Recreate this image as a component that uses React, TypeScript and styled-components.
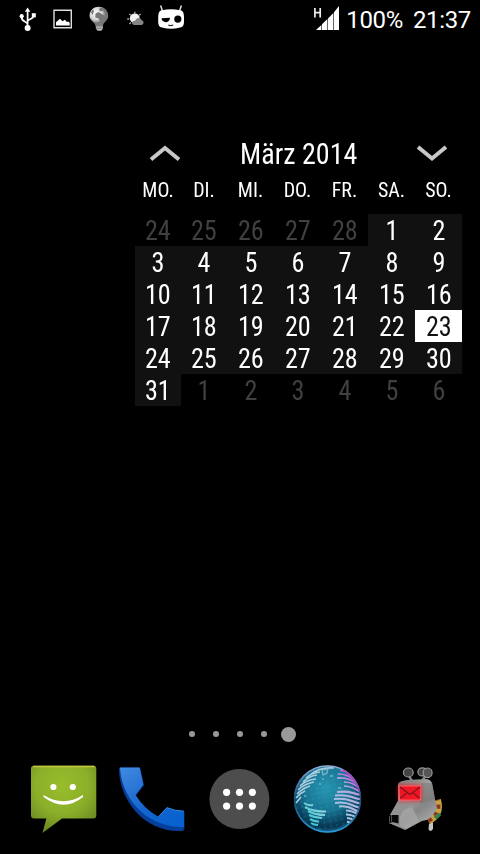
import React from 'react';
import styled, { createGlobalStyle } from 'styled-components';

const GlobalStyle = createGlobalStyle`
  * { box-sizing: border-box; }
  body { margin: 0; background: #000; }
`;

const Screen = styled.main`
  width: 480px;
  height: 854px;
  overflow: hidden;
  background: #000;
  color: #fff;
  font-family: Roboto, "Liberation Sans", sans-serif;
  display: flex;
  flex-direction: column;
`;

const StatusBar = styled.header`
  height: 38px;
  flex: none;
  display: flex;
  justify-content: space-between;
  padding-right: 9px;
`;

const StatusGroup = styled.div`
  display: flex;
`;

const StatusText = styled.span<{ $gap: number }>`
  font-size: 24px;
  font-weight: 380;
  line-height: 40px;
  letter-spacing: -0.35px;
  margin-left: ${(p) => p.$gap}px;
  white-space: nowrap;
`;

const Icon = styled.svg`
  display: block;
  flex: none;
`;

const Calendar = styled.section`
  width: 327px;
  margin: 96px 0 0 135px;
  flex: none;
  font-family: "Roboto Condensed", Roboto, sans-serif;
  font-stretch: 75%;
`;

const MonthBar = styled.div`
  height: 40px;
  display: flex;
  justify-content: space-between;
  align-items: center;
  padding: 0 13px;
`;

const MonthTitle = styled.h1`
  margin: 0;
  font-size: 30px;
  line-height: 40px;
  font-weight: 400;
  transform: scaleX(0.935);
`;

const Grid = styled.div`
  display: grid;
  grid-template-columns: 46px 46px repeat(5, 47px);
  text-align: center;
`;

const Weekday = styled.div`
  height: 40px;
  font-size: 21px;
  font-weight: 400;
  line-height: 32px;
  transform: scaleX(0.95);
`;

type DayKind = 'outside' | 'current' | 'today';

const Day = styled.div<{ $kind: DayKind }>`
  height: 32px;
  font-size: 28px;
  font-weight: 390;
  line-height: 34px;
  background: ${(p) => (p.$kind === 'today' ? '#fff' : p.$kind === 'current' ? '#111' : '#000')};
  color: ${(p) => (p.$kind === 'today' ? '#111' : p.$kind === 'current' ? '#fff' : '#404040')};
`;

const DayNumber = styled.span`
  display: inline-block;
  transform: scaleX(0.935);
`;

const Pager = styled.nav`
  height: 16px;
  width: 120px;
  margin: auto 0 0 180.3px;
  display: grid;
  grid-template-columns: repeat(5, 24px);
  place-items: center;
  flex: none;
`;

const PageDot = styled.i<{ $active?: boolean }>`
  width: ${(p) => (p.$active ? 15 : 6)}px;
  height: ${(p) => (p.$active ? 15 : 6)}px;
  border-radius: 50%;
  background: #999;
`;

const Dock = styled.footer`
  height: 94px;
  margin-top: 18px;
  display: grid;
  grid-template-columns: 20px repeat(5, 88px) 20px;
  flex: none;

  & > :first-child { grid-column: 2; }
`;

const UsbIcon = () => (
  <Icon width="30" height="38" viewBox="13 0 30 38">
    <path d="M27.6 28V10M27.6 24.5C27.6 21 21.5 22.5 21.5 17M27.6 21.5C27.6 18.5 33.8 20 33.8 15" fill="none" stroke="#fff" strokeWidth="1.7" />
    <path d="M27.6 7.4l2.8 4.4h-5.6z" fill="#fff" />
    <circle cx="27.6" cy="28" r="3" fill="#fff" />
    <circle cx="21.7" cy="16.2" r="2.1" fill="#fff" />
    <path d="M31.8 13.2h4v4.2h-4z" fill="#fff" />
  </Icon>
);

const PictureIcon = () => (
  <Icon width="36" height="38" viewBox="43 0 36 38">
    <path d="M54 10.2H71.3V27.8H54z" fill="none" stroke="#ddd" strokeWidth="1.4" />
    <path d="M56 25.5V22.2L60 18.7L62.5 21.2L64.8 19.8L67 22L68.3 21.5L69.7 23V25.5z" fill="#fff" />
  </Icon>
);

const BulbIcon = () => (
  <Icon width="42" height="38" viewBox="79 0 42 38">
    <defs>
      <radialGradient id="bulb" cx=".35" cy=".35">
        <stop stopColor="#fff" /><stop offset=".65" stopColor="#d4d4d4" /><stop offset="1" stopColor="#777" />
      </radialGradient>
    </defs>
    <path d="M89.5 16C89.5 3.6 108.2 3.6 108.2 16C108.2 21 103 22 103 26H95.5C95.5 22 89.5 21 89.5 16z" fill="url(#bulb)" />
    <path d="M95.5 13.5L98.5 12L104 15.5L104.5 17.5L101.8 21L100 21.5L98.8 18.5L95.3 17.4zM99 8.8L102 7.5L106 10L107.5 13.5L105 13L103 10.6L100 11.4zM91 12L93 9.5L94 11L92.5 15z" fill="#777" />
    <path d="M95.8 25.5H103V28.4L101.2 31H97.5L95.8 28.4z" fill="#888" />
    <path d="M96 27.2H102.7M97 29.5H102" stroke="#ccc" strokeWidth=".8" />
  </Icon>
);

const WeatherIcon = () => (
  <Icon width="35" height="38" viewBox="121 0 35 38">
    <path d="M134.8 11.8V13.6M129.3 14L130.8 15.3M140.6 14L139.2 15.3M127.2 19H129.2M129.5 24L130.8 22.5" stroke="#aaa" strokeWidth="1.4" />
    <circle cx="134.8" cy="18.3" r="4.9" fill="#f2f2f2" />
    <path d="M134 25C130.6 24.6 132.3 20 135 21C136.6 16.2 141.8 17.8 141.4 20.3C144.6 20.6 144 25.4 141 25z" fill="#858585" />
  </Icon>
);

const MascotIcon = () => (
  <Icon width="36" height="38" viewBox="156 0 36 38">
    <path d="M160.6 5.5L162.5 11M181.4 5.5L179.5 11" stroke="#ddd" strokeWidth="1.5" />
    <path d="M162 10.2Q171 8.4 180.2 10.2Q184 10.4 184 17V22Q184 27 180 27.5Q171 30 162 27.5Q158.2 27 158.2 22V17Q158.2 10.4 162 10.2z" fill="#fff" />
    <path d="M161.5 18.3L170 17.7C170 23.5 161.8 23.5 161.5 18.3z" />
    <circle cx="177.8" cy="19.1" r="3.6" />
    <path d="M168.3 25.2Q171 26.2 173.2 25" stroke="#000" fill="none" />
  </Icon>
);

const SignalIcon = () => (
  <Icon width="27" height="38" viewBox="314 0 27 38">
    <path d="M315.9 8V17.5M321.2 8V17.5M316 12.7H321" stroke="#eee" strokeWidth="1.7" fill="none" />
    <path d="M317 30L322.4 24.9V30zM323 24.3L328.4 19V30H323zM329 18.4L334.4 13V30H329zM335 12.3L340 6V30H335z" fill="#fff" />
  </Icon>
);

const Chevron = ({ down = false }: { down?: boolean }) => (
  <Icon width="34" height="22" viewBox="0 0 34 22">
    <path d={down ? 'M3 4L17 15.5L31 4' : 'M3 16.5L17 5L31 16.5'} fill="none" stroke="#c8c8c8" strokeWidth="4" />
  </Icon>
);

const MessagesIcon = () => (
  <Icon width="88" height="94" viewBox="20 760 88 94">
    <defs>
      <radialGradient id="green" cx=".48" cy=".3" r=".75">
        <stop stopColor="#98bd2b" /><stop offset=".55" stopColor="#8baf29" /><stop offset="1" stopColor="#668321" />
      </radialGradient>
    </defs>
    <path d="M34 765.7H93.5Q96.3 765.7 96.3 768.5V815.5Q96.3 818.5 93.5 818.5H62L42.4 833L46.4 818.5H34Q31 818.5 31 815.5V768.5Q31 765.7 34 765.7z" fill="url(#green)" />
    <path d="M33 766.5H94.5" stroke="#c6c645" strokeWidth="1.4" />
    <circle cx="53.4" cy="787" r="3.1" fill="#fff" />
    <circle cx="72.8" cy="787" r="3.1" fill="#fff" />
    <path d="M43.6 795Q63.5 807.5 83 795V797Q64 812.5 43.6 797z" fill="#fff" />
  </Icon>
);

const PhoneIcon = () => (
  <Icon width="88" height="94" viewBox="108 760 88 94">
    <defs>
      <linearGradient id="blue" x1="0" y1="0" x2=".8" y2="1">
        <stop stopColor="#4289e0" /><stop offset=".6" stopColor="#1565ce" /><stop offset="1" stopColor="#0762cd" />
      </linearGradient>
    </defs>
    <path d="M119 769Q119 767.5 120.5 767.5H139Q140.3 767.5 140.6 769.5L144 785L136 795.5Q144 808.5 158.3 816.5L166.7 807.3Q174 810.5 183 811Q184.4 811.3 184.4 813V829Q184 831 181.5 831C145 832.5 119.5 801 119 769z" fill="#063f99" />
    <path d="M120 768H139.7L143.3 784.8L135.4 795Q144 809 158.4 817.2L167 808Q174 811 184 811.5V827C152 828 122.5 804 120 768z" fill="url(#blue)" />
    <path d="M120 768H139.7M158.4 816.8L167 807.7Q174 810.8 184 811.2" stroke="#3492e9" strokeWidth=".9" fill="none" />
  </Icon>
);

const AppsIcon = () => (
  <Icon width="88" height="94" viewBox="196 760 88 94">
    <circle cx="239.4" cy="799" r="30" fill="#4d4d4d" />
    {[792.3, 806.1].map((y) => [226.6, 239.5, 252.4].map((x) => <circle key={`${x}-${y}`} cx={x} cy={y} r="3.6" fill="#fff" />))}
  </Icon>
);

const GlobeIcon = () => (
  <Icon width="88" height="94" viewBox="284 760 88 94">
    <defs>
      <radialGradient id="sea" cx=".48" cy=".34" r=".68">
        <stop stopColor="#2796b1" /><stop offset=".5" stopColor="#187594" /><stop offset=".86" stopColor="#06334f" /><stop offset="1" stopColor="#227fb4" />
      </radialGradient>
      <linearGradient id="land" gradientUnits="userSpaceOnUse" x1="305" y1="824" x2="354" y2="774">
        <stop stopColor="#22c4cc" /><stop offset=".35" stopColor="#9bd3df" /><stop offset=".8" stopColor="#bba9df" /><stop offset="1" stopColor="#d73bd7" />
      </linearGradient>
      <linearGradient id="rim" x1="0" y1="0" x2="0" y2="1">
        <stop stopColor="#91abd9" /><stop offset=".5" stopColor="#174d78" /><stop offset="1" stopColor="#2c98d6" />
      </linearGradient>
      <pattern id="sparks" width="6" height="5" patternUnits="userSpaceOnUse" patternTransform="rotate(-12)">
        <path d="M1 2h2.3" stroke="#40b1d4" strokeWidth="1" />
      </pattern>
      <clipPath id="globeClip"><circle cx="327.5" cy="799" r="33.3" /></clipPath>
    </defs>
    <circle cx="327.5" cy="799" r="33.5" fill="url(#sea)" />
    <g clipPath="url(#globeClip)" fill="none" stroke="url(#land)" strokeWidth="2.1">
      <path d="M293 768H362V836H293z" fill="url(#sparks)" stroke="none" opacity=".35" />
      <path d="M304 803Q308 806 313 805M305 807Q313 812 326 811.5M308 811Q315 815 325 815M309 815Q315 818 322 818M310 819Q315 822 319 821.5M311 823Q314 825 318 825" />
      <path d="M337 792Q346 791 353 793T361 795M335 795.5Q345 794.5 352 797T361 799M334 799Q344 798 352 801T361 803M335 803Q344 801.5 352 805T360 807M339 806.5Q347 805.5 353 809T360 811M346 810.5Q352 810.5 359 815M346 814.5Q352 814.5 357 818M347 818Q351 818 355 821M347 821.5L353 824" />
      <path d="M340 770Q347 771 351 776M338 774Q348 774 354 780M337 778Q349 777 357 784M344 782Q353 782 359 788M344 786Q352 786 360 792" strokeWidth="1.7" />
      <path d="M310 775Q319 767 334 768M306 778Q311 773 320 772M303 782Q309 776 317 775M300 786Q306 780 316 779M298 790Q304 784 314 782M297 794Q303 788 310 786M296 798Q300 793 305 791M296 803L301 797" strokeWidth="1.6" stroke="#a9cbdc" />
      <path d="M322 770L328 769L327 773L323 775zM322 779h2M330 776h3M319 784h2M338 788h3M304 796h2" strokeWidth="1.5" stroke="#8bbdd0" opacity=".8" />
    </g>
    <circle cx="327.5" cy="799" r="33" fill="none" stroke="url(#rim)" strokeWidth="1.6" />
    <path d="M343 770A33 33 0 0 1 359 791" fill="none" stroke="#a545c4" strokeWidth="1.5" />
  </Icon>
);

const RobotMailIcon = () => (
  <Icon width="88" height="94" viewBox="372 760 88 94">
    <defs>
      <linearGradient id="metal" x1="0" y1="0" x2=".65" y2="1">
        <stop stopColor="#707070" /><stop offset=".45" stopColor="#a3a3a3" /><stop offset=".7" stopColor="#868686" /><stop offset="1" stopColor="#aaa" />
      </linearGradient>
      <filter id="redGlow" x="-30%" y="-40%" width="160%" height="180%"><feGaussianBlur stdDeviation="2" /></filter>
    </defs>
    <path d="M409 776L412 781M426 775L422 781" stroke="#888" strokeWidth="2.4" />
    <ellipse cx="408.3" cy="772.5" rx="4.9" ry="4.5" fill="#444" stroke="#999" strokeWidth="1.2" />
    <ellipse cx="422.4" cy="771.9" rx="4.5" ry="4" fill="#444" stroke="#999" strokeWidth="1.2" />
    <ellipse cx="427.6" cy="772.8" rx="4.5" ry="4.8" fill="#555" stroke="#999" strokeWidth="1.2" />
    <path d="M429 824L433 822V829Q430 833 428.5 829z" fill="#c4c4c4" />
    <path d="M428 820.5Q441 814 437 800" fill="none" stroke="#c4a344" strokeWidth="8" />
    <path d="M428 820.5Q441 814 437 800" fill="none" stroke="#8d3620" strokeWidth="5" strokeDasharray="4 4" />
    <path d="M435 818L440 814" stroke="#388047" strokeWidth="4" />
    <path d="M398 784Q399 781 407 780L426 779Q430 779 432 783L435 799L437 808Q431 821 422 821L405 830L389 823V817L398 801z" fill="url(#metal)" />
    <path d="M398 801L414 804Q400 809 400 818V827L389 823V817z" fill="#929292" />
    <path d="M400 817Q402 809 412 807L419 821L407 829L400 826z" fill="#aaa" opacity=".7" />
    <path d="M421 783L432 783L435 799L420 804z" fill="#777" opacity=".55" />
    <path d="M389.5 815H391.5V823H389.5zM392 815H398.5V823.5L392 822z" fill="#070707" />
    <path d="M398 785H421.5L421 801H399z" fill="#f00b16" filter="url(#redGlow)" opacity=".8" />
    <path d="M399 786H421L420.5 800H399.5z" fill="#ef1724" stroke="#ff7275" strokeWidth=".8" />
    <path d="M400 787L410 794.5L420 787M400.5 798L407 793M419.5 798L413 793" fill="none" stroke="#85131a" strokeWidth="1.3" />
  </Icon>
);

const weekdays = ['MO.', 'DI.', 'MI.', 'DO.', 'FR.', 'SA.', 'SO.'];
const days: { n: number; kind: DayKind }[] = Array.from({ length: 42 }, (_, i) => {
  if (i < 5) return { n: 24 + i, kind: 'outside' };
  const n = i - 4;
  if (n > 31) return { n: n - 31, kind: 'outside' };
  return { n, kind: n === 23 ? 'today' : 'current' };
});

export default function App() {
  return (
    <>
      <GlobalStyle />
      <Screen>
        <StatusBar>
          <StatusGroup>
            <Icon width="13" height="38" />
            <UsbIcon /><PictureIcon /><BulbIcon /><WeatherIcon /><MascotIcon />
          </StatusGroup>
          <StatusGroup>
            <SignalIcon />
            <StatusText $gap={6}>100%</StatusText>
            <StatusText $gap={10}>21:37</StatusText>
          </StatusGroup>
        </StatusBar>
        <Calendar>
          <MonthBar>
            <Chevron />
            <MonthTitle>März 2014</MonthTitle>
            <Chevron down />
          </MonthBar>
          <Grid>
            {weekdays.map((d) => <Weekday key={d}>{d}</Weekday>)}
            {days.map((d, i) => <Day key={i} $kind={d.kind}><DayNumber>{d.n}</DayNumber></Day>)}
          </Grid>
        </Calendar>
        <Pager>
          <PageDot /><PageDot /><PageDot /><PageDot /><PageDot $active />
        </Pager>
        <Dock>
          <MessagesIcon /><PhoneIcon /><AppsIcon /><GlobeIcon /><RobotMailIcon />
        </Dock>
      </Screen>
    </>
  );
}
